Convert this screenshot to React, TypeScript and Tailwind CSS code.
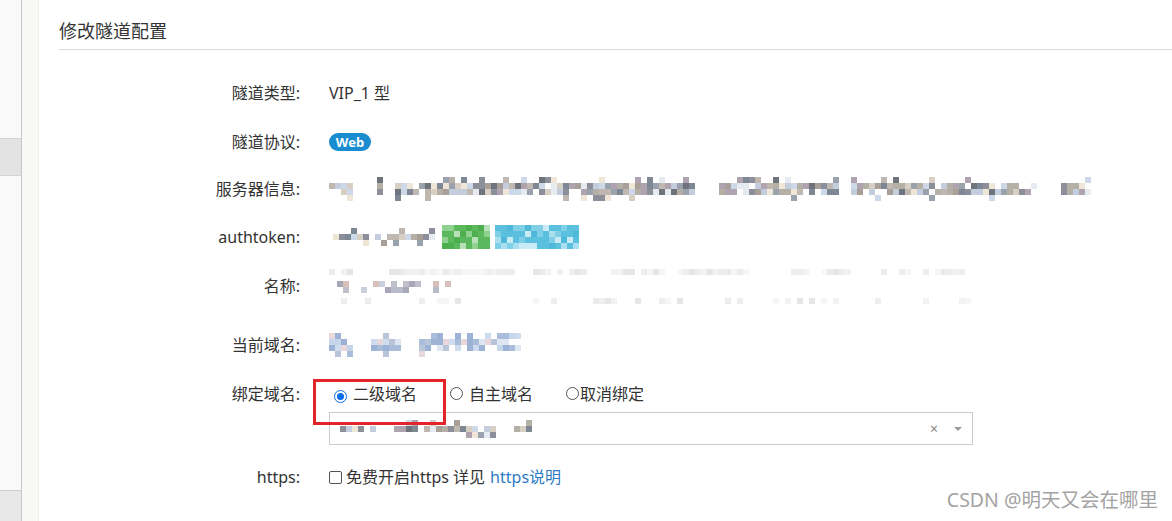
import React from "react";

function rng(seed: number) {
  let s = seed >>> 0;
  return () => {
    s = (s * 1664525 + 1013904223) >>> 0;
    return s / 4294967296;
  };
}

type MosaicProps = {
  w: number;
  h: number;
  seed: number;
  palette: string[];
  density: number[];
  cell?: number;
  gapProb?: number;
};

function Mosaic({ w, h, seed, palette, density, cell = 6, gapProb = 0.06 }: MosaicProps) {
  const r = rng(seed);
  const cols = Math.floor(w / cell);
  const gaps: boolean[] = [];
  let gapLeft = 0;
  for (let c = 0; c < cols; c++) {
    if (gapLeft > 0) {
      gaps.push(true);
      gapLeft--;
    } else if (r() < gapProb) {
      gapLeft = 1 + Math.floor(r() * 3);
      gaps.push(true);
    } else gaps.push(false);
  }
  const rects: React.ReactNode[] = [];
  density.forEach((d, row) => {
    for (let c = 0; c < cols; c++) {
      if (gaps[c]) continue;
      if (r() < d) {
        const col = palette[Math.floor(r() * palette.length)];
        rects.push(
          <rect key={row + "-" + c} x={c * cell} y={row * cell} width={cell} height={cell} fill={col} />
        );
      }
    }
  });
  return (
    <svg width={w} height={h} viewBox={`0 0 ${w} ${h}`} className="block" shapeRendering="crispEdges">
      {rects}
    </svg>
  );
}

const grayPal = ["#9aa3ad", "#b5b0a5", "#c4cddd", "#a8a098", "#7e8794", "#d8cfc4", "#e6ebf2", "#8c8f99", "#bfb7b0", "#cdd9e8", "#f0e6d8", "#6e737c", "#b0a3b0"];
const greenPal = ["#4cae4c", "#5cb85c", "#8fd18f", "#b8e0b8", "#4cb04c", "#5cb85c"];
const bluePal = ["#5bc0de", "#5bc0de", "#7fcfe6", "#a9dff0", "#4db8d9", "#c8ebf5", "#5bc0de"];
const domainPal = ["#a9bcd9", "#c5d5ea", "#dde6f2", "#b8c4d8", "#e8d8dc", "#9db3d6", "#cfdcee"];
const lightPal = ["#ececec", "#f2f2f2", "#e6e6e6", "#f6f6f6", "#eeeeee"];
const namePal = ["#a7a7b7", "#c0c0cc", "#9aa8b8", "#d8c0b8", "#b8bcc8", "#c9d2dc"];

function Row({ label, h, children }: { label: string; h: number; children?: React.ReactNode }) {
  return (
    <div className="flex items-center" style={{ height: h }}>
      <div className="w-[241px] shrink-0 text-right text-[16px] leading-[22px] text-[#333]">{label}</div>
      <div className="ml-[29px] flex items-center">{children}</div>
    </div>
  );
}

function Radio({ checked }: { checked?: boolean }) {
  return (
    <span
      className={
        "inline-flex h-[13px] w-[13px] shrink-0 items-center justify-center rounded-full border bg-white " +
        (checked ? "border-[#0b6fe8]" : "border-[#555]")
      }
    >
      {checked && <span className="h-[7px] w-[7px] rounded-full bg-[#0b6fe8]" />}
    </span>
  );
}

export default function App() {
  return (
    <div
      className="flex h-[521px] w-[1172px] overflow-hidden bg-white text-[#333]"
      style={{ fontFamily: '"Noto Sans", "Noto Sans CJK SC", sans-serif' }}
    >
      <aside className="flex w-[22px] shrink-0 flex-col border-r border-[#c8c8c8] bg-[#f9f9f9]">
        <div className="h-[138px]" />
        <div className="h-[38px] border-y border-[#d4d4d4] bg-[#e3e3e3]" />
        <div className="flex-1" />
        <div className="h-[31px] border-t border-[#cfcfcf] bg-[#e8e8e8]" />
      </aside>
      <div className="w-[17px] shrink-0 border-r border-[#ededed] bg-[#f8f8f5]" />
      <main className="relative flex-1 pl-[20px]">
        <div className="flex h-[50px] items-center border-b border-[#dcdcdc] pt-[12px]">
          <h1 className="text-[18px] leading-[24px] text-[#333]">修改隧道配置</h1>
        </div>

        <div className="pt-[19px]">
          <Row label="隧道类型:" h={48}>
            <span className="text-[16px] leading-[22px]">VIP_1 型</span>
          </Row>
          <Row label="隧道协议:" h={50}>
            <span className="flex h-[18px] w-[42px] items-center justify-center rounded-full bg-[#1a8dd0] text-[13px] font-bold leading-none text-white">
              Web
            </span>
          </Row>
          <Row label="服务器信息:" h={44}>
            <Mosaic w={762} h={24} seed={7} palette={grayPal} density={[0.22, 0.9, 0.9, 0.15]} />
          </Row>
          <Row label="authtoken:" h={52}>
            <div className="flex items-center gap-[5px] pl-[4px]">
              <Mosaic w={104} h={18} seed={21} palette={grayPal} density={[0.1, 0.9, 0.2]} gapProb={0.03} />
              <Mosaic w={48} h={24} seed={33} palette={greenPal} density={[1, 1, 1, 1]} gapProb={0} />
              <Mosaic w={84} h={24} seed={44} palette={bluePal} density={[1, 1, 1, 1]} gapProb={0} />
            </div>
          </Row>
          <Row label="名称:" h={46}>
            <div className="relative h-[36px] w-[646px]">
              <div className="absolute left-0 top-[1px]">
                <Mosaic w={646} h={6} seed={55} palette={lightPal} density={[0.8]} gapProb={0.1} />
              </div>
              <div className="absolute left-[8px] top-[13px]">
                <Mosaic w={118} h={12} seed={66} palette={namePal} density={[0.75, 0.6]} gapProb={0.08} />
              </div>
              <div className="absolute left-[0px] top-[30px]">
                <Mosaic w={646} h={6} seed={77} palette={lightPal} density={[0.4]} gapProb={0.15} />
              </div>
            </div>
          </Row>
          <Row label="当前域名:" h={72}>
            <Mosaic w={192} h={24} seed={88} palette={domainPal} density={[0.25, 0.8, 0.8, 0.2]} />
          </Row>

          <div className="flex">
            <div className="w-[241px] shrink-0 text-right text-[16px] leading-[26px]">绑定域名:</div>
            <div className="relative ml-[29px]">
              <div className="pointer-events-none absolute left-[-16px] top-[-2px] h-[46px] w-[133px] border-[3px] border-[#e3242b]" />
              <div className="flex h-[26px] items-center text-[16px] leading-[22px]">
                <span className="ml-[5px]"><Radio checked /></span>
                <span className="ml-[6px]">二级域名</span>
                <span className="ml-[33px]"><Radio /></span>
                <span className="ml-[6px]">自主域名</span>
                <span className="ml-[33px]"><Radio /></span>
                <span className="ml-[1px]">取消绑定</span>
              </div>
              <div className="mt-[5px] flex h-[33px] w-[644px] items-center border border-[#cccccc] bg-white">
                <div className="ml-[10px]">
                  <Mosaic w={192} h={18} seed={99} palette={grayPal} density={[0.2, 0.85, 0.2]} />
                </div>
                <div className="flex-1" />
                <span className="mr-[16px] text-[14px] leading-none text-[#888]">×</span>
                <span className="mr-[10px] h-0 w-0 border-x-[4px] border-t-[4px] border-x-transparent border-t-[#999]" />
              </div>
            </div>
          </div>

          <div className="mt-[19px] flex h-[26px] items-center">
            <div className="w-[241px] shrink-0 text-right text-[16px] leading-[22px]">https:</div>
            <div className="ml-[29px] flex items-center text-[16px] leading-[22px]">
              <span className="h-[13px] w-[13px] rounded-[2px] border border-[#555] bg-white" />
              <span className="ml-[4px]">免费开启https 详见 </span>
              <span className="ml-[5px] text-[#2e7bc4]">https说明</span>
            </div>
          </div>
        </div>

        <div className="absolute bottom-[9px] right-[14px] text-[19.5px] leading-[24px] text-[#a3a3a3]">
          CSDN @明天又会在哪里
        </div>
      </main>
    </div>
  );
}
